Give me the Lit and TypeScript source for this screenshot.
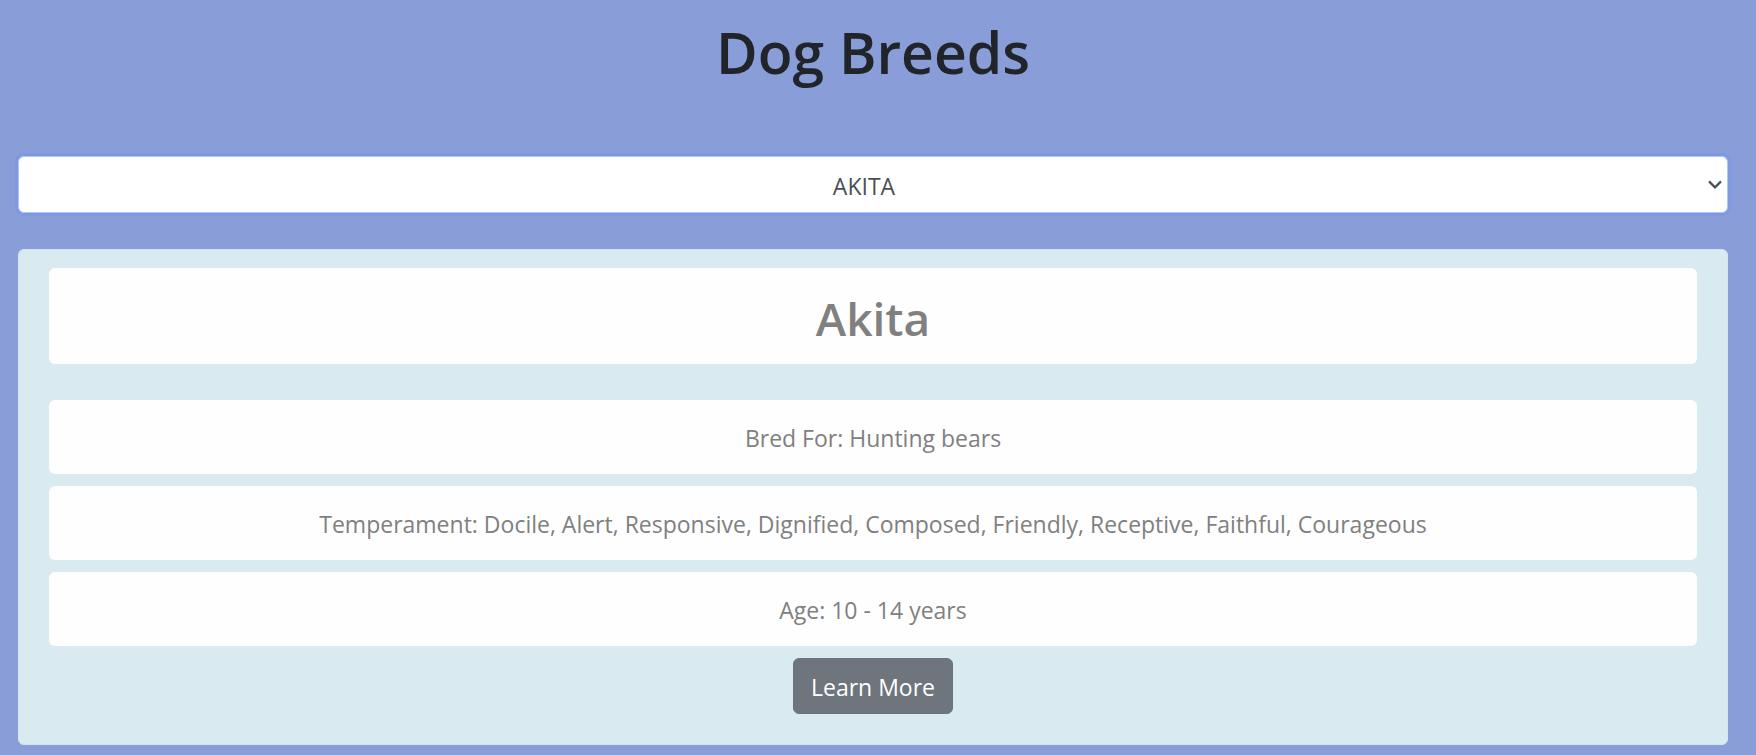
import { LitElement, html, css } from "lit";
import { customElement, state } from "lit/decorators.js";

interface Breed {
  name: string;
  bredFor: string;
  temperament: string;
  age: string;
}

const BREEDS: Breed[] = [
  {
    name: "Akita",
    bredFor: "Hunting bears",
    temperament:
      "Docile, Alert, Responsive, Dignified, Composed, Friendly, Receptive, Faithful, Courageous",
    age: "10 - 14 years",
  },
];

@customElement("breed-card")
class BreedCard extends LitElement {
  static properties = { breed: { attribute: false } };
  declare breed: Breed;

  static styles = css`
    :host {
      display: block;
    }
    .card {
      box-sizing: border-box;
      display: flex;
      flex-direction: column;
      gap: 12px;
      padding: 18px 30px 30px;
      background: #d9eaf0;
      border: 1px solid #d3e6f0;
      border-radius: 6px;
      color: #808080;
      text-align: center;
    }
    .name,
    .fact {
      margin: 0;
      background: #fefefe;
      border-radius: 6px;
    }
    .name {
      margin-bottom: 24px;
      padding: 20px 18px 16px;
      font-size: 46px;
      line-height: 60px;
      font-weight: 600;
    }
    .fact {
      padding: 20px 18px 18px;
      line-height: 36px;
    }
    .more {
      align-self: center;
      padding: 11px 17px 9px;
      border: 1px solid #6c757d;
      border-radius: 6px;
      background: #6e757d;
      color: #fff;
      font: inherit;
      line-height: 34px;
      cursor: pointer;
    }
  `;

  render() {
    const b = this.breed;
    return html`
      <article class="card">
        <h2 class="name">${b.name}</h2>
        <p class="fact">Bred For: ${b.bredFor}</p>
        <p class="fact">Temperament: ${b.temperament}</p>
        <p class="fact">Age: ${b.age}</p>
        <button class="more" type="button">Learn More</button>
      </article>
    `;
  }
}

@customElement("app-root")
class AppRoot extends LitElement {
  @state() private selected = 0;

  static styles = css`
    :host {
      display: block;
      box-sizing: border-box;
      min-height: 100vh;
      padding: 16px 28px 10px 18px;
      background: #899dd8;
      color: #212529;
      font-family: "Segoe UI", "Open Sans", "Noto Sans", sans-serif;
      font-size: 23px;
      line-height: 36px;
    }
    .title {
      margin: 0 0 68px;
      font-size: 57px;
      line-height: 72px;
      font-weight: 600;
      text-align: center;
    }
    .picker {
      display: grid;
      align-items: center;
      margin-bottom: 36px;
    }
    .select,
    .chevron {
      grid-area: 1 / 1;
    }
    .select {
      appearance: none;
      width: 100%;
      height: 57px;
      padding: 2px 36px 0 18px;
      border: 1px solid #a9c9f6;
      border-radius: 6px;
      outline: none;
      box-shadow: 0 0 0 3px #7f98e0;
      background: #fff;
      color: #495057;
      font: inherit;
      text-align: center;
      text-align-last: center;
    }
    .chevron {
      justify-self: end;
      width: 14px;
      height: 10px;
      margin-right: 6px;
      pointer-events: none;
    }
  `;

  private onChange(e: Event) {
    this.selected = (e.target as HTMLSelectElement).selectedIndex;
  }

  render() {
    return html`
      <h1 class="title">Dog Breeds</h1>
      <div class="picker">
        <select class="select" aria-label="Dog breed" @change=${this.onChange}>
          ${BREEDS.map((b) => html`<option>${b.name.toUpperCase()}</option>`)}
        </select>
        <svg class="chevron" viewBox="0 0 14 10" aria-hidden="true">
          <path d="M1 1.4 L7 7.4 L13 1.4" fill="none" stroke="#495057" stroke-width="2.2" />
        </svg>
      </div>
      <breed-card .breed=${BREEDS[this.selected]}></breed-card>
    `;
  }
}
